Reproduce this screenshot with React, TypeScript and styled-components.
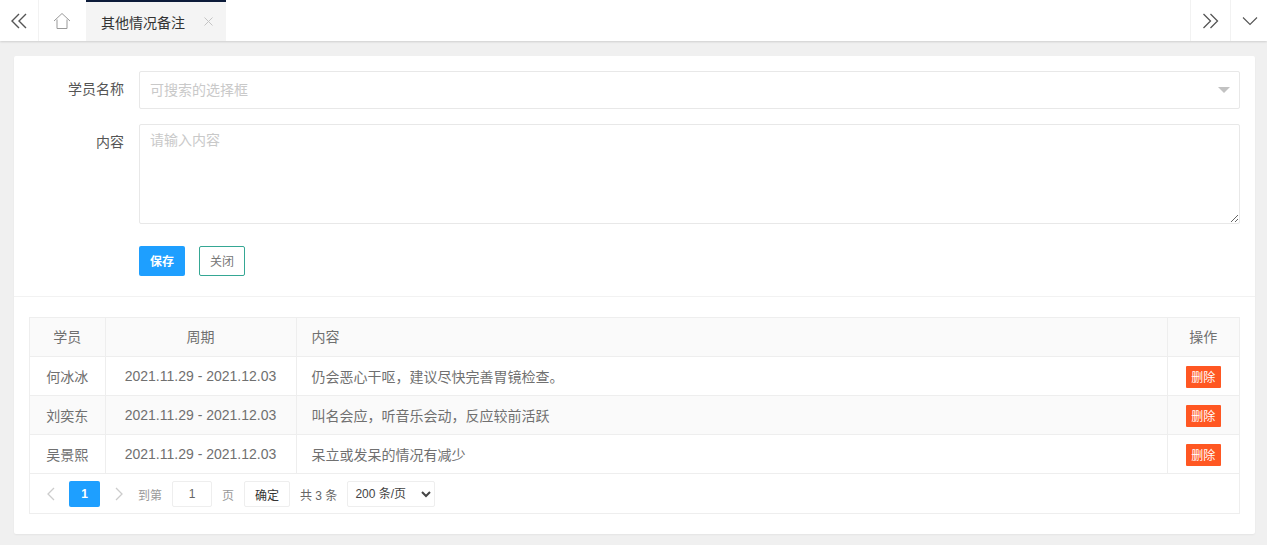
import React from 'react';
import styled, { createGlobalStyle } from 'styled-components';

const Global = createGlobalStyle`
  html, body { margin: 0; padding: 0; background: #f0f0f0; }
  body { font-family: "Liberation Sans", "Noto Sans CJK SC", sans-serif; font-size: 14px; color: #666; }
  * { box-sizing: border-box; }
  input, textarea, select, button { font-family: inherit; }
`;
const Page = styled.div`width: 1267px; height: 545px; overflow: hidden; display: flex; flex-direction: column;`;
const TopBar = styled.header`
  height: 41px; background: #fff; display: flex; align-items: stretch;
  box-shadow: 0 1px 2px rgba(0,0,0,.14); flex: none; position: relative;
`;
const IconCell = styled.div<{ $w: number; $side?: 'left' | 'right' }>`
  width: ${p => p.$w}px; display: flex; align-items: center; justify-content: center; flex: none;
  ${p => p.$side === 'left' ? 'border-left: 1px solid #f2f2f2;' : ''}
  ${p => p.$side === 'right' ? 'border-right: 1px solid #f2f2f2;' : ''}
`;
const Tab = styled.div`
  width: 140px; background: #f4f4f4; border-top: 2px solid #0c1b3a; display: flex; align-items: center;
  padding-left: 15px; color: #333; font-size: 14px; flex: none;
`;
const TabClose = styled.span`margin-left: 19px; display: flex;`;
const Spacer = styled.div`flex: 1;`;
const Card = styled.main`
  margin: 15px 12px 0 14px; height: 478px; background: #fff; border-radius: 2px;
  box-shadow: 0 1px 2px rgba(0,0,0,.05); display: flex; flex-direction: column;
`;
const Form = styled.section`padding: 15px 15px 20px 0; border-bottom: 1px solid #f2f2f2; height: 241px;`;
const Row = styled.div<{ $last?: boolean }>`display: flex; margin-bottom: ${p => p.$last ? 0 : 15}px;`;
const Label = styled.label<{ $line?: number }>`
  width: 110px; margin-right: 15px; text-align: right; font-size: 14px; color: #555; flex: none;
  line-height: ${p => p.$line ?? 36}px;
`;
const SelectBox = styled.div`
  flex: 1; height: 38px; border: 1px solid #e8e8e8; border-radius: 2px; display: flex; align-items: center;
  justify-content: space-between; padding: 0 10px 2px; color: #c9c9c9; font-size: 14px;
`;
const Caret = styled.span`
  width: 0; height: 0; border: 6px solid transparent; border-top-color: #c2c2c2; border-bottom: 0; display: block; margin: 2px -1px 0 0;
`;
const TextArea = styled.textarea`
  flex: 1; height: 100px; border: 1px solid #e8e8e8; border-radius: 2px; padding: 5px 10px; font-size: 14px; line-height: 20px;
  outline: none; color: #666; display: block; resize: vertical;
  &::placeholder { color: #c9c9c9; opacity: 1; }
`;
const Buttons = styled.div`display: flex; gap: 14px; margin-left: 125px; margin-top: 22px;`;
const SaveBtn = styled.button`
  width: 46px; height: 30px; border: 0; background: #1e9fff; color: #fff; border-radius: 2px; font-size: 12px; font-weight: 700; padding: 0 0 2px;
`;
const CloseBtn = styled.button`
  width: 46px; height: 30px; border: 1px solid #35a794; background: #fff; color: #777; border-radius: 2px; font-size: 12px; padding: 0 0 2px;
`;
const TableWrap = styled.section`margin: 20px 15px 0 15px; border: 1px solid #eee; height: 197px;`;
const Table = styled.table`
  width: 100%; border-collapse: collapse; table-layout: fixed; font-size: 14px; color: #707070;
`;
const Th = styled.th<{ $left?: boolean }>`
  height: 38px; font-weight: 400; background: #fafafa; border-right: 1px solid #eee; border-bottom: 1px solid #eee; padding: 0 15px 2px;
  text-align: ${p => p.$left ? 'left' : 'center'}; color: #707070;
  &:last-child { border-right: 0; }
`;
const Tr = styled.tr<{ $alt?: boolean }>`background: ${p => p.$alt ? '#fafafa' : '#fff'};`;
const Td = styled.td<{ $left?: boolean }>`
  height: 39px; border-right: 1px solid #eee; border-bottom: 1px solid #eee; padding: 0 15px;
  text-align: ${p => p.$left ? 'left' : 'center'};
  &:last-child { border-right: 0; }
`;
const DelCell = styled(Td)`padding: 2px 15px 0;`;
const DelBtn = styled.button`
  width: 35px; height: 22px; background: #ff5722; color: #fff; border: 0; border-radius: 1px; font-size: 12px; padding: 0; display: block; margin: 0 auto;
`;
const Pager = styled.div`height: 39px; display: flex; align-items: center; padding: 2px 0 0 10px; font-size: 12px; color: #999;`;
const Arrow = styled.span`width: 21px; display: flex; justify-content: center; flex: none;`;
const PageNum = styled.span`
  width: 31px; height: 26px; background: #1e9fff; color: #fff; font-weight: 700; border-radius: 2px; display: flex; align-items: center; justify-content: center;
  margin: 0 8px; font-size: 12px;
`;
const JumpLabel = styled.span`color: #999; margin-left: 9px;`;
const Muted = styled.span`color: #999;`;
const PageInput = styled.input`
  width: 40px; height: 26px; border: 1px solid #eee; border-radius: 2px; text-align: center; font-size: 12px; color: #666; margin: 0 10px 0 10px; padding: 0; outline: none;
`;
const Confirm = styled.button`
  width: 46px; height: 26px; border: 1px solid #eee; background: #fff; border-radius: 2px; font-size: 12px; color: #333; margin-left: 10px; padding: 0;
`;
const Total = styled.span`margin-left: 10px; color: #666;`;
const SizeSelect = styled.select`
  width: 88px; height: 26px; border: 1px solid #eee; border-radius: 2px; background: #fff; font-size: 12px; color: #444; margin-left: 10px; padding: 0 0 0 3px; outline: none;
`;

const Icon = ({ d, w = 18, c = '#555', sw = 1.4 }: { d: string; w?: number; c?: string; sw?: number }) => (
  <svg width={w} height={w} viewBox="0 0 18 18" fill="none" stroke={c} strokeWidth={sw}><path d={d} /></svg>
);
const rows = [
  ['何冰冰', '仍会恶心干呕，建议尽快完善胃镜检查。'],
  ['刘奕东', '叫名会应，听音乐会动，反应较前活跃'],
  ['吴景熙', '呆立或发呆的情况有减少'],
];
export default function App() {
  return (
    <Page>
      <Global />
      <TopBar>
        <IconCell $w={39} $side="right"><Icon d="M9 2 L2 9 L9 16 M16 2 L9 9 L16 16" /></IconCell>
        <IconCell $w={47}><Icon c="#999" sw={1} d="M0 9 L8 1.5 L16 9 M3 7.5 V16.5 H13 V7.5" /></IconCell>
        <Tab>其他情况备注<TabClose><svg width="9" height="9" viewBox="0 0 9 9" stroke="#c4c4c4" fill="none"><path d="M.5.5l8 8M8.5.5l-8 8" /></svg></TabClose></Tab>
        <Spacer />
        <IconCell $w={40} $side="left"><Icon d="M1.5 2 L8.5 9 L1.5 16 M8.5 2 L15.5 9 L8.5 16" sw={1.3} /></IconCell>
        <IconCell $w={37} $side="left"><Icon sw={1.1} d="M3 5.5 L10 12.5 L17 5.5" /></IconCell>
      </TopBar>
      <Card>
        <Form>
          <Row><Label>学员名称</Label><SelectBox>可搜索的选择框<Caret /></SelectBox></Row>
          <Row $last><Label>内容</Label><TextArea placeholder="请输入内容" /></Row>
          <Buttons><SaveBtn>保存</SaveBtn><CloseBtn>关闭</CloseBtn></Buttons>
        </Form>
        <TableWrap>
          <Table>
            <colgroup><col width="75" /><col width="191" /><col /><col width="72" /></colgroup>
            <thead><tr><Th>学员</Th><Th>周期</Th><Th $left>内容</Th><Th>操作</Th></tr></thead>
            <tbody>
              {rows.map((r, i) => (
                <Tr key={r[0]} $alt={i === 1}>
                  <Td>{r[0]}</Td><Td>2021.11.29 - 2021.12.03</Td><Td $left>{r[1]}</Td><DelCell><DelBtn>删除</DelBtn></DelCell>
                </Tr>
              ))}
            </tbody>
          </Table>
          <Pager>
            <Arrow><svg width="10" height="14" viewBox="0 0 10 14" fill="none" stroke="#ccc" strokeWidth="1.3"><path d="M8 1 L2 7 L8 13" /></svg></Arrow>
            <PageNum>1</PageNum>
            <Arrow><svg width="10" height="14" viewBox="0 0 10 14" fill="none" stroke="#ccc" strokeWidth="1.3"><path d="M2 1 L8 7 L2 13" /></svg></Arrow>
            <JumpLabel>到第</JumpLabel>
            <PageInput defaultValue="1" />
            <Muted>页</Muted>
            <Confirm>确定</Confirm>
            <Total>共 3 条</Total>
            <SizeSelect defaultValue="200"><option value="200">200 条/页</option></SizeSelect>
          </Pager>
        </TableWrap>
      </Card>
    </Page>
  );
}
